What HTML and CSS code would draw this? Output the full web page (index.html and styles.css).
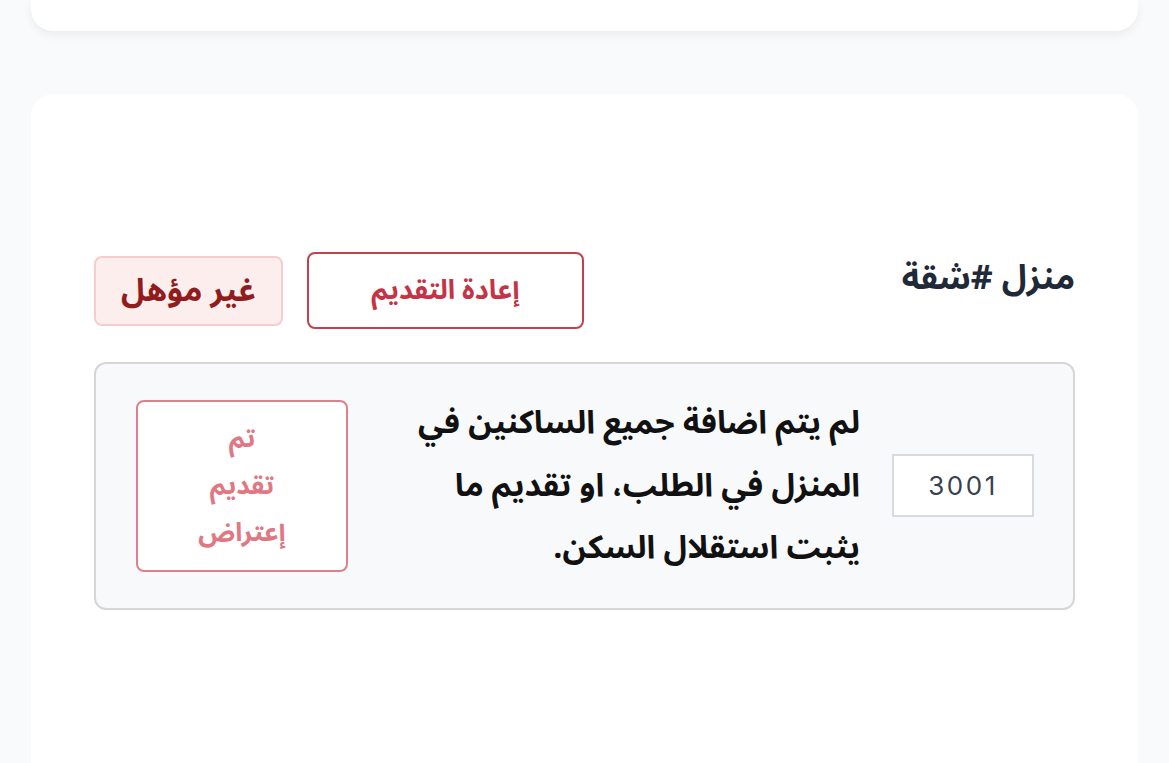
FILE: index.html
```html
<!DOCTYPE html>
<html lang="ar" dir="rtl">
<head>
<meta charset="utf-8">
<title>طلب</title>
<link rel="stylesheet" href="styles.css">
</head>
<body>
<div class="page">
  <div class="card card-top"></div>
  <div class="card card-main">
    <div class="header">
      <h2 class="title">منزل #شقة</h2>
      <div class="actions">
        <button class="btn-retry">إعادة التقديم</button>
        <span class="badge">غير مؤهل</span>
      </div>
    </div>
    <div class="panel">
      <div class="code">3001</div>
      <p class="reason">لم يتم اضافة جميع الساكنين في المنزل في الطلب، او تقديم ما يثبت استقلال السكن.</p>
      <button class="btn-objection"><span class="btn-objection-label">تم تقديم إعتراض</span></button>
    </div>
  </div>
</div>
</body>
</html>
```

FILE: styles.css
```css
* { box-sizing: border-box; }
html, body {
  margin: 0;
  padding: 0;
  height: 100%;
  overflow: hidden;
  background: #f9fafb;
  font-family: "Noto Sans Arabic", "Noto Kufi Arabic", "DejaVu Sans", sans-serif;
}
.page {
  padding: 0 31px;
}
.card {
  background: #ffffff;
  border-radius: 0 0 22px 22px;
}
.card-top {
  height: 31px;
  box-shadow: 0 4px 10px rgba(0, 0, 0, 0.06);
}
.card-main {
  margin-top: 63px;
  border-radius: 22px 22px 0 0;
  min-height: 720px;
  padding: 158px 63px 63px;
}
.header {
  display: flex;
  justify-content: space-between;
  align-items: flex-start;
}
.title {
  margin: 2px 0 0;
  font-size: 34px;
  font-weight: 700;
  color: #1f2937;
  line-height: 48px;
}
.actions {
  display: flex;
  align-items: center;
  gap: 24px;
}
.btn-retry {
  width: 277px;
  height: 77px;
  background: #ffffff;
  border: 2px solid #c3414f;
  border-radius: 8px;
  color: #c53446;
  font-family: inherit;
  font-size: 27px;
  font-weight: 700;
}
.badge {
  display: flex;
  align-items: center;
  justify-content: center;
  width: 189px;
  height: 70px;
  background: #fdeeee;
  border: 2px solid #f8cccc;
  border-radius: 8px;
  color: #8f1d1d;
  font-size: 32px;
  font-weight: 700;
}
.panel {
  margin-top: 33px;
  display: flex;
  align-items: center;
  gap: 32px;
  padding: 28px 39px 28px 40px;
  background: #f8f9fb;
  border: 2px solid #d6d6da;
  border-radius: 12px;
}
.code {
  flex: none;
  width: 142px;
  height: 63px;
  display: flex;
  align-items: center;
  justify-content: center;
  background: #ffffff;
  border: 2px solid #d7dae0;
  font-family: "Inter", "DejaVu Sans", sans-serif;
  font-size: 26px;
  letter-spacing: 2.5px;
  color: #374151;
  direction: ltr;
}
.reason {
  flex: 1;
  margin: 0;
  font-size: 32px;
  font-weight: 700;
  line-height: 62.5px;
  color: #111111;
}
.btn-objection {
  flex: none;
  width: 212px;
  height: 172px;
  padding: 0 20px;
  background: #ffffff;
  border: 2px solid #dd808b;
  border-radius: 8px;
  color: #e07884;
  font-family: inherit;
  font-size: 26px;
  font-weight: 700;
  line-height: 47px;
}
.btn-objection-label {
  display: inline-block;
  width: min-content;
}
```
